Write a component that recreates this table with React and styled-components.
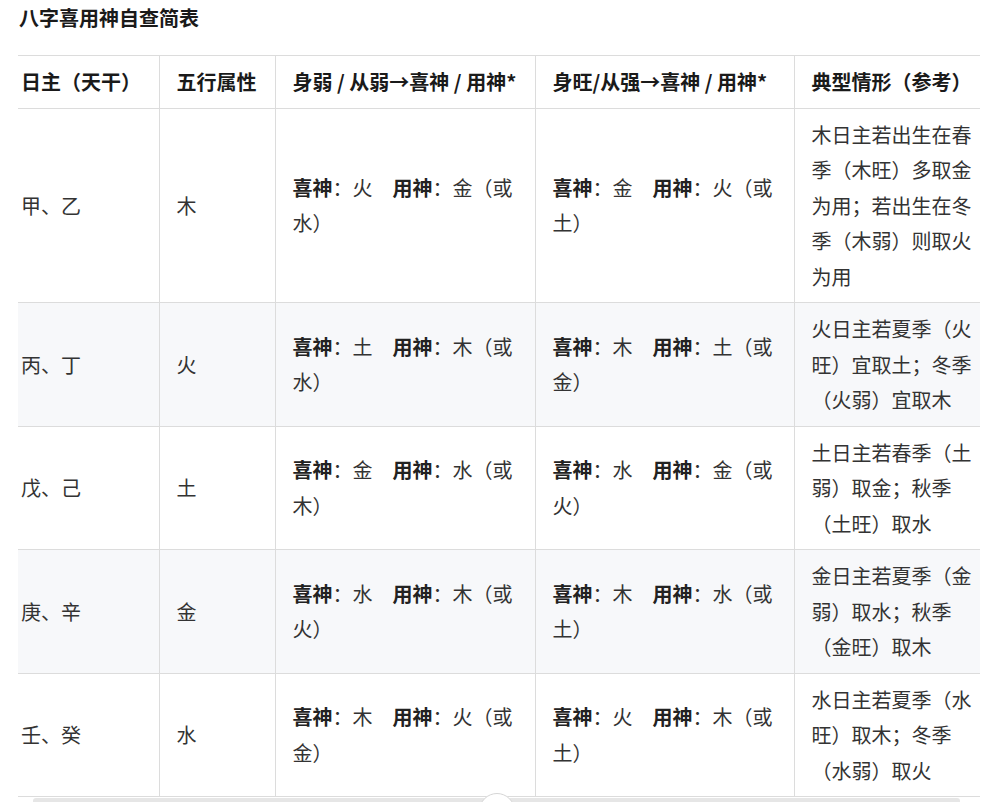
import React from 'react';
import styled, { createGlobalStyle } from 'styled-components';

const GlobalStyle = createGlobalStyle`
  html, body {
    margin: 0;
    padding: 0;
    background: #fff;
    overflow: hidden;
  }
  body {
    font-family: "Noto Sans CJK SC", "Noto Sans", sans-serif;
    color: #1f1f1f;
  }
`

const Page = styled.div`
  position: relative;
  height: 802px;
  padding-left: 18px;
  box-sizing: border-box;
`

const Title = styled.h3`
  margin: 0 0 19px 1px;
  font-size: 20px;
  line-height: 36px;
  font-weight: 600;
  color: #1a1a1a;
`

const ScrollBox = styled.div`
  width: 962px;
  overflow: hidden;
`

const Table = styled.table`
  border-collapse: collapse;
  table-layout: fixed;
  width: 972px;
  font-size: 20px;
  line-height: 35.5px;
  border-top: 1px solid #dcdcdc;
`

const Row = styled.tr`
  background: ${props => props.striped ? '#f7f8fa' : '#fff'};
`

const Head = styled.th`
  text-align: left;
  font-weight: 600;
  color: #1a1a1a;
  padding: 8px 16px 8px 17px;
  padding-left: ${props => props.first ? '3px' : '17px'};
  border-bottom: 1px solid #dcdcdc;
  border-left: ${props => props.first ? 'none' : '1px solid #dcdcdc'};
  white-space: nowrap;
`

const Cell = styled.td`
  vertical-align: middle;
  padding: 8px 14px 8px 17px;
  padding-left: ${props => props.first ? '3px' : '17px'};
  border-bottom: 1px solid #dcdcdc;
  border-left: ${props => props.first ? 'none' : '1px solid #dcdcdc'};
  color: #333;
`

const Label = styled.strong`
  font-weight: 600;
  color: #222;
`

const Track = styled.div`
  margin: 1px 0 0 15px;
  width: 927px;
  height: 6px;
  background: #e6e6e6;
  border-radius: 3px;
`

const FloatButton = styled.div`
  position: absolute;
  left: 479px;
  top: 793px;
  width: 36px;
  height: 36px;
  border-radius: 50%;
  background: #fff;
  border: 1px solid #d6d6d6;
  box-sizing: border-box;
`

const rows = [
  { stem: '甲、乙', el: '木', weak: ['火', '金（或水）'], strong: ['金', '火（或土）'], note: '木日主若出生在春季（木旺）多取金为用；若出生在冬季（木弱）则取火为用' },
  { stem: '丙、丁', el: '火', weak: ['土', '木（或水）'], strong: ['木', '土（或金）'], note: '火日主若夏季（火旺）宜取土；冬季（火弱）宜取木' },
  { stem: '戊、己', el: '土', weak: ['金', '水（或木）'], strong: ['水', '金（或火）'], note: '土日主若春季（土弱）取金；秋季（土旺）取水' },
  { stem: '庚、辛', el: '金', weak: ['水', '木（或火）'], strong: ['木', '水（或土）'], note: '金日主若夏季（金弱）取水；秋季（金旺）取木' },
  { stem: '壬、癸', el: '水', weak: ['木', '火（或金）'], strong: ['火', '木（或土）'], note: '水日主若夏季（水旺）取木；冬季（水弱）取火' },
]

const Pair = ({ v }) => (
  <>
    <Label>喜神</Label>：{v[0]}{'\u3000'}<Label>用神</Label>：{v[1]}
  </>
)

export default function App() {
  return (
    <Page>
      <GlobalStyle />
      <Title>八字喜用神自查简表</Title>
      <ScrollBox>
        <Table>
          <colgroup>
            <col style={{ width: 141 }} />
            <col style={{ width: 116 }} />
            <col style={{ width: 260 }} />
            <col style={{ width: 259 }} />
            <col style={{ width: 196 }} />
          </colgroup>
          <thead>
            <tr>
              <Head first>日主（天干）</Head>
              <Head>五行属性</Head>
              <Head>身弱 / 从弱→喜神 / 用神*</Head>
              <Head>身旺/从强→喜神 / 用神*</Head>
              <Head>典型情形（参考）</Head>
            </tr>
          </thead>
          <tbody>
            {rows.map((r, i) => (
              <Row key={r.stem} striped={i % 2 === 1}>
                <Cell first>{r.stem}</Cell>
                <Cell>{r.el}</Cell>
                <Cell><Pair v={r.weak} /></Cell>
                <Cell><Pair v={r.strong} /></Cell>
                <Cell>{r.note}</Cell>
              </Row>
            ))}
          </tbody>
        </Table>
        <Track />
      </ScrollBox>
      <FloatButton />
    </Page>
  );
}
